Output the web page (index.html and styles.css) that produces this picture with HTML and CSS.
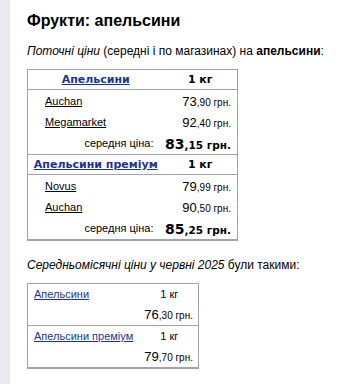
FILE: index.html
```html
<!DOCTYPE html>
<html lang="uk">
<head>
<meta charset="utf-8">
<title>Фрукти: апельсини</title>
<link rel="stylesheet" href="styles.css">
</head>
<body>
<div class="page">
  <aside class="rail"></aside>
  <main class="content">
    <h1 class="title">Фрукти: апельсини</h1>
    <p class="lead"><em>Поточні ціни</em> (середні і по магазинах) на <strong>апельсини</strong>:</p>

    <table class="prices">
      <colgroup><col class="c-name"><col class="c-val"></colgroup>
      <tbody>
        <tr class="head">
          <th><a href="#">Апельсини</a></th>
          <th>1 кг</th>
        </tr>
        <tr class="row">
          <td class="shop"><a href="#">Auchan</a></td>
          <td class="price"><span class="big">73</span><span class="small">,90 грн.</span></td>
        </tr>
        <tr class="row">
          <td class="shop"><a href="#">Megamarket</a></td>
          <td class="price"><span class="big">92</span><span class="small">,40 грн.</span></td>
        </tr>
        <tr class="avg">
          <td class="avg-label">середня ціна:</td>
          <td class="avg-price"><span class="big">83</span><span class="small">,15 грн.</span></td>
        </tr>
        <tr class="head">
          <th><a href="#">Апельсини преміум</a></th>
          <th>1 кг</th>
        </tr>
        <tr class="row">
          <td class="shop"><a href="#">Novus</a></td>
          <td class="price"><span class="big">79</span><span class="small">,99 грн.</span></td>
        </tr>
        <tr class="row">
          <td class="shop"><a href="#">Auchan</a></td>
          <td class="price"><span class="big">90</span><span class="small">,50 грн.</span></td>
        </tr>
        <tr class="avg">
          <td class="avg-label">середня ціна:</td>
          <td class="avg-price"><span class="big">85</span><span class="small">,25 грн.</span></td>
        </tr>
      </tbody>
    </table>

    <p class="lead month"><em>Середньомісячні ціни у червні 2025</em> були такими:</p>

    <table class="monthly">
      <colgroup><col class="m-name"><col class="m-val"></colgroup>
      <tbody>
        <tr class="m-top">
          <td class="m-link"><a href="#">Апельсини</a></td>
          <td class="m-unit">1 кг</td>
        </tr>
        <tr class="m-bottom">
          <td></td>
          <td class="m-price"><span class="big">76</span><span class="small">,30 грн.</span></td>
        </tr>
        <tr class="m-top sep">
          <td class="m-link"><a href="#">Апельсини преміум</a></td>
          <td class="m-unit">1 кг</td>
        </tr>
        <tr class="m-bottom">
          <td></td>
          <td class="m-price"><span class="big">79</span><span class="small">,70 грн.</span></td>
        </tr>
      </tbody>
    </table>

    <p class="lead tail">так само в минулий рік ціни були нижчими.</p>
  </main>
</div>
</body>
</html>
```

FILE: styles.css
```css
html, body {
  margin: 0;
  padding: 0;
  background: #ffffff;
}

body {
  font-family: "Liberation Sans", Arial, sans-serif;
  color: #000000;
}

.page {
  display: flex;
  min-height: 384px;
}

.rail {
  flex: 0 0 10px;
  background: #e9e9ee;
}

.content {
  flex: 1;
  padding: 11px 0 0 17px;
}

.title {
  margin: 0;
  font-size: 16px;
  line-height: 20px;
  font-weight: bold;
}

.lead {
  margin: 12px 0 10px;
  font-size: 12px;
  line-height: 16px;
}

.lead.month {
  margin-top: 16px;
}

.lead.tail {
  margin-top: 14px;
}

a {
  color: #1b3399;
  text-decoration: underline;
}

/* current prices table */
.prices {
  border-collapse: collapse;
  border: 1px solid #a3a3a3;
  border-bottom-width: 2px;
  width: 211px;
}

.c-name { width: 136px; }

.prices th,
.prices td {
  padding: 0;
  white-space: nowrap;
}

.prices .head th {
  height: 19px;
  font-family: "DejaVu Sans", Verdana, sans-serif;
  font-size: 11px;
  font-weight: bold;
  text-align: center;
  border-bottom: 1px solid #a3a3a3;
  border-top: 1px solid #a3a3a3;
}

.prices .row td {
  height: 21px;
}

.prices .shop {
  padding-left: 17px;
  font-size: 11px;
}

.prices .shop a {
  color: #000000;
}

.prices .price {
  text-align: right;
  padding-right: 6px;
}

.big { font-size: 13px; }
.small { font-size: 10px; }

.prices .avg td {
  height: 22px;
}

.avg-label {
  text-align: right;
  padding-right: 10px !important;
  font-size: 11px;
}

.avg-price {
  text-align: right;
  padding-right: 6px !important;
  font-family: "DejaVu Sans", Verdana, sans-serif;
  font-weight: bold;
}

.avg-price .big { font-size: 14px; }
.avg-price .small { font-size: 10.5px; }

/* monthly averages table */
.monthly {
  border-collapse: collapse;
  border: 1px solid #a3a3a3;
  border-bottom-width: 2px;
  width: 172px;
}

.m-name { width: 113px; }

.monthly td {
  padding: 0;
  font-size: 11px;
  white-space: nowrap;
}

.monthly .m-top td {
  height: 20px;
}

.monthly .m-top.sep td {
  border-top: 1px solid #a3a3a3;
}

.monthly .m-bottom td {
  height: 21px;
}

.m-link {
  padding-left: 6px !important;
}

.m-unit {
  text-align: center;
}

.m-price {
  text-align: right;
  padding-right: 5px !important;
}
```
